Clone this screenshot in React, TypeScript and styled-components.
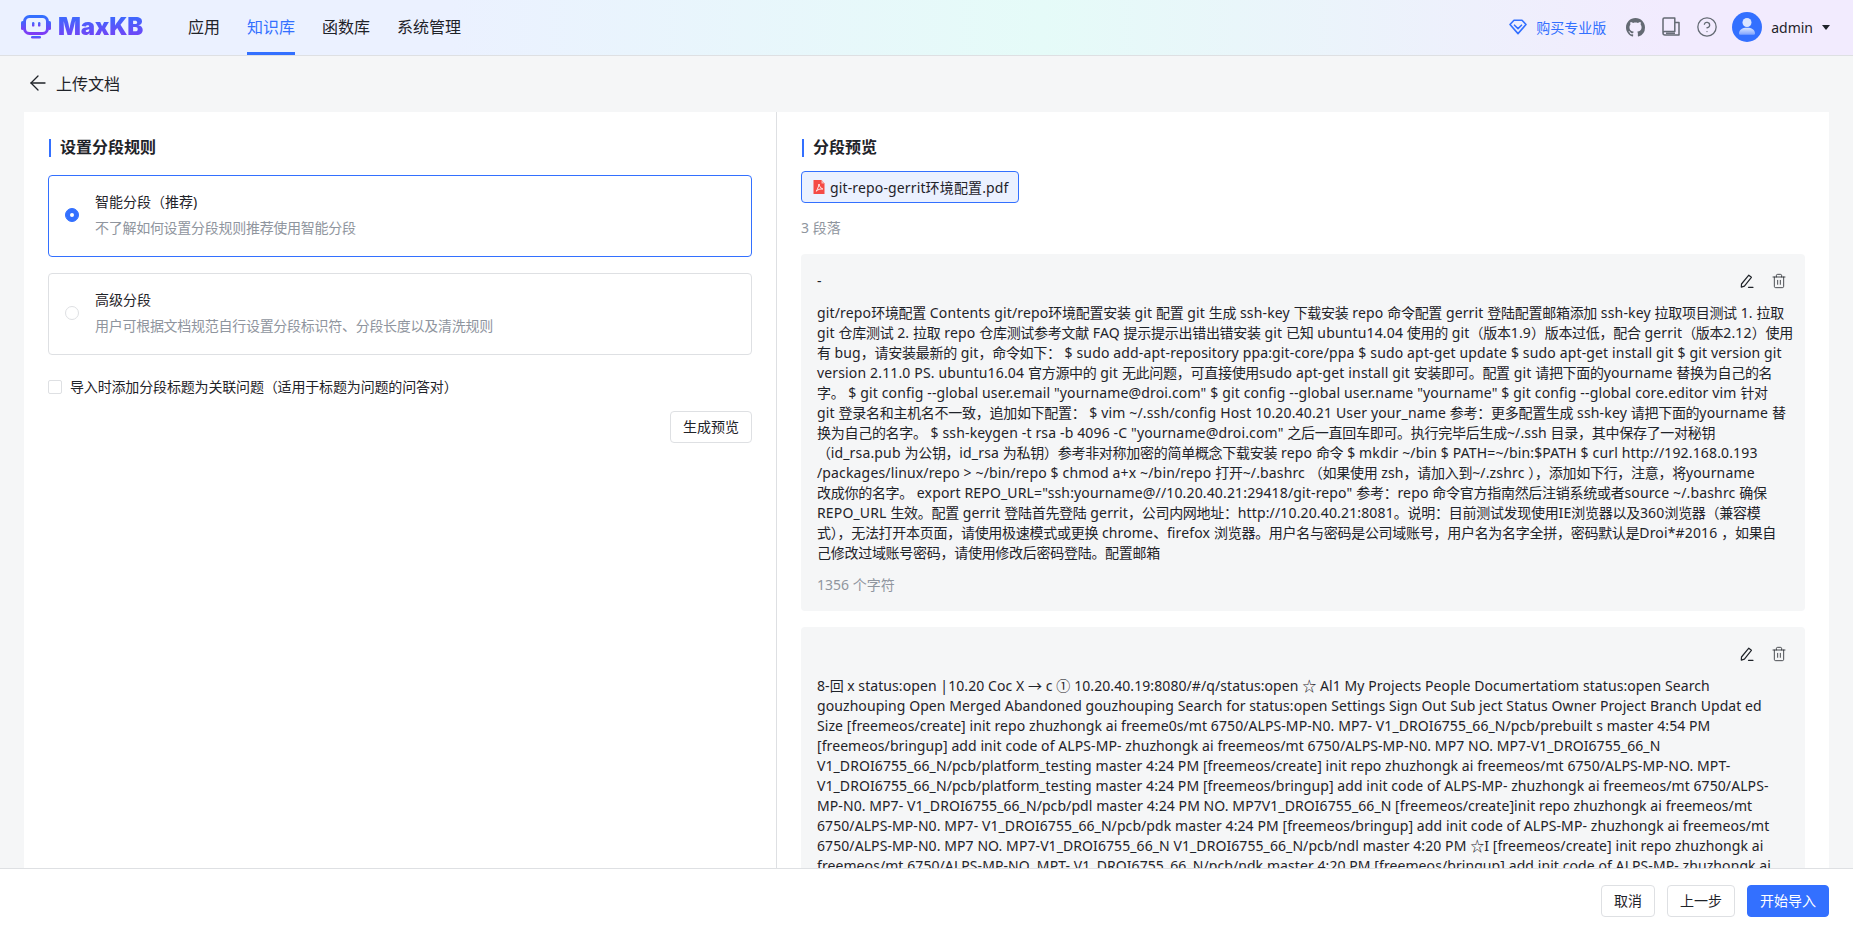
import React from 'react';
import styled, { createGlobalStyle } from 'styled-components';
import { ArrowLeft, CircleHelp, Trash2 } from 'lucide-react';

const GlobalStyle = createGlobalStyle`
  html, body, #root {
    margin: 0;
    height: 100%;
  }
  body {
    overflow: hidden;
    font-family: "Noto Sans", "Noto Sans CJK SC", sans-serif;
    font-size: 14px;
    color: #1f2329;
    background: #f5f6f7;
  }
  * {
    box-sizing: border-box;
  }
`;

const Page = styled.div`
  height: 933px;
  display: flex;
  flex-direction: column;
`;

const Header = styled.header`
  flex: 0 0 56px;
  display: flex;
  align-items: center;
  padding: 0 23px 1px 21px;
  border-bottom: 1px solid #dee0e3;
  background: linear-gradient(90deg, #ebf1ff 24.34%, #e5fbf8 56.18%, #f2ebfe 90.18%);
`;

const Logo = styled.div`
  display: flex;
  align-items: center;
  gap: 7px;
  width: 167px;
`;

const LogoText = styled.span`
  font-family: Inter, sans-serif;
  font-size: 24px;
  font-weight: 900;
  line-height: 28px;
  letter-spacing: -0.2px;
  background: linear-gradient(180deg, #3370ff 0%, #7f3bf5 100%);
  -webkit-background-clip: text;
  background-clip: text;
  color: transparent;
`;

const Nav = styled.nav`
  display: flex;
  align-self: stretch;
  gap: 27px;
`;

const NavItem = styled.a<{ $active?: boolean }>`
  display: flex;
  align-items: center;
  height: 55px;
  padding-bottom: 1px;
  font-size: 16px;
  color: ${p => (p.$active ? '#3370ff' : '#1f2329')};
  border-bottom: 3px solid ${p => (p.$active ? '#3370ff' : 'transparent')};
  margin-bottom: -1px;
`;

const HeaderRight = styled.div`
  margin-left: auto;
  display: flex;
  align-items: center;
`;

const BuyLink = styled.a`
  display: flex;
  align-items: center;
  gap: 9px;
  color: #3370ff;
  margin-right: 18px;
`;

const IconButton = styled.span`
  display: flex;
  width: 22px;
  height: 22px;
  align-items: center;
  justify-content: center;
  margin-right: 14px;
  color: #646a73;
`;

const Avatar = styled.span`
  display: block;
  width: 30px;
  height: 30px;
  margin-right: 9px;
`;

const UserName = styled.span`
  color: #1f2329;
`;

const Caret = styled.span`
  width: 0;
  height: 0;
  margin-left: 9px;
  border-left: 4px solid transparent;
  border-right: 4px solid transparent;
  border-top: 5px solid #1f2329;
`;

const BackRow = styled.div`
  flex: 0 0 56px;
  display: flex;
  align-items: center;
  gap: 6px;
  padding: 0 0 2px 26px;
  font-size: 16px;
`;

const Panel = styled.main`
  flex: 1;
  min-height: 0;
  margin: 0 24px;
  display: grid;
  grid-template-columns: 753px 1fr;
  background: #fff;
  overflow: hidden;
`;

const LeftColumn = styled.section`
  padding: 24px 24px 0;
  border-right: 1px solid #dee0e3;
`;

const RightColumn = styled.section`
  padding: 24px 24px 0;
  overflow: hidden;
`;

const SectionTitle = styled.h4<{ $gap: number }>`
  position: relative;
  margin: 0 0 ${p => p.$gap}px 1px;
  padding: 0 0 2px 11px;
  font-size: 16px;
  font-weight: 600;
  line-height: 22px;
  &::before {
    content: '';
    position: absolute;
    left: 0;
    top: 3px;
    width: 2px;
    height: 18px;
    background: #3370ff;
  }
`;

const RuleCard = styled.label<{ $active?: boolean }>`
  display: flex;
  align-items: center;
  gap: 16px;
  height: 82px;
  padding: 0 16px 2px;
  margin-bottom: 16px;
  border: 1px solid ${p => (p.$active ? '#3370ff' : '#dee0e3')};
  border-radius: 4px;
`;

const Radio = styled.span<{ $active?: boolean }>`
  flex: none;
  position: relative;
  width: 14px;
  height: 14px;
  border-radius: 50%;
  border: 1px solid ${p => (p.$active ? '#3370ff' : '#dee0e3')};
  background: ${p => (p.$active ? '#3370ff' : '#fff')};
  &::after {
    content: ${p => (p.$active ? "''" : 'none')};
    position: absolute;
    left: 4px;
    top: 4px;
    width: 4px;
    height: 4px;
    border-radius: 50%;
    background: #fff;
  }
`;

const RuleTitle = styled.div`
  line-height: 22px;
  margin-bottom: 4px;
`;

const MutedText = styled.div`
  line-height: 22px;
  color: #8f959e;
  letter-spacing: -0.28px;
`;

const CheckRow = styled.label`
  display: flex;
  align-items: center;
  gap: 8px;
  height: 22px;
  margin-top: 20px;
  letter-spacing: -0.16px;
`;

const CheckBox = styled.span`
  width: 14px;
  height: 14px;
  margin-top: 1px;
  border: 1px solid #dee0e3;
  border-radius: 2px;
  background: #fff;
`;

const PreviewRow = styled.div`
  display: flex;
  justify-content: flex-end;
  margin-top: 14px;
`;

const Button = styled.button<{ $primary?: boolean }>`
  height: 32px;
  padding: 0 12px;
  font: inherit;
  line-height: 22px;
  border-radius: 4px;
  border: 1px solid ${p => (p.$primary ? '#3370ff' : '#dee0e3')};
  background: ${p => (p.$primary ? '#3370ff' : '#fff')};
  color: ${p => (p.$primary ? '#fff' : '#1f2329')};
`;

const FileChip = styled.div`
  display: inline-flex;
  align-items: center;
  gap: 4px;
  height: 32px;
  padding: 0 9px 0 10px;
  border: 1px solid #3370ff;
  border-radius: 4px;
  background: #ebf1ff;
  letter-spacing: 0.14px;
`;

const Count = styled(MutedText)`
  margin: 14px 0 15px;
  letter-spacing: 0;
`;

const Paragraph = styled.article`
  padding: 16px 16px 15px;
  margin-bottom: 16px;
  border-radius: 4px;
  background: #f5f6f7;
`;

const ParagraphHead = styled.div`
  display: flex;
  align-items: center;
  height: 22px;
  line-height: 22px;
  margin-bottom: 11px;
`;

const ParagraphTitle = styled.span`
  flex: 1;
`;

const ParagraphAction = styled.span`
  display: flex;
  width: 16px;
  height: 16px;
  margin-left: 16px;
  color: #1f2329;
  &:last-child {
    margin-right: 2px;
  }
`;

const ParagraphLine = styled.div<{ $tracking: number }>`
  line-height: 20px;
  white-space: nowrap;
  letter-spacing: ${p => p.$tracking}px;
`;

const HanRun = styled.span`
  letter-spacing: -0.28px;
`;

const CharCount = styled(MutedText)`
  margin-top: 11px;
  letter-spacing: 0;
`;

const Footer = styled.footer`
  flex: 0 0 65px;
  display: flex;
  align-items: center;
  justify-content: flex-end;
  gap: 12px;
  padding: 0 24px;
  border-top: 1px solid #dee0e3;
  background: #fff;
`;

const LogoMark = () => (
  <svg width="30" height="24" viewBox="0 0 30 24" fill="none">
    <defs>
      <linearGradient id="logoFill" x1="0" y1="0" x2="0" y2="1">
        <stop offset="0" stopColor="#3370ff" />
        <stop offset="1" stopColor="#7f3bf5" />
      </linearGradient>
    </defs>
    <rect x="0" y="6" width="3" height="9" rx="1.5" fill="url(#logoFill)" />
    <rect x="27" y="6" width="3" height="9" rx="1.5" fill="url(#logoFill)" />
    <rect x="3.5" y="1.5" width="23" height="17" rx="5" stroke="url(#logoFill)" strokeWidth="3" />
    <rect x="11" y="7" width="2.4" height="4.6" rx="1.2" fill="url(#logoFill)" />
    <rect x="17" y="7" width="2.4" height="4.6" rx="1.2" fill="url(#logoFill)" />
    <rect x="10" y="21" width="10" height="2.6" rx="1.3" fill="url(#logoFill)" />
  </svg>
);

const DiamondIcon = () => (
  <svg width="18" height="16" viewBox="0 0 18 16" fill="none" stroke="#3370ff" strokeWidth="1.6" strokeLinejoin="round" strokeLinecap="round">
    <path d="M5 1.2h8l4 4.3L9 14.6 1 5.500z" />
    <path d="M5.500 6.200 9 9.600l3.500-3.400" />
  </svg>
);

const GithubIcon = () => (
  <svg width="19" height="19" viewBox="0 0 16 16" fill="currentColor">
    <path d="M8 0C3.58 0 0 3.58 0 8c0 3.54 2.29 6.53 5.47 7.59.4.07.55-.17.55-.38 0-.19-.01-.82-.01-1.49-2.01.37-2.53-.49-2.69-.94-.09-.23-.48-.94-.82-1.13-.28-.15-.68-.52-.01-.53.63-.01 1.08.58 1.23.82.72 1.21 1.87.87 2.33.66.07-.52.28-.87.51-1.07-1.78-.2-3.64-.89-3.64-3.95 0-.87.31-1.59.82-2.15-.08-.2-.36-1.02.08-2.12 0 0 .67-.21 2.2.82.64-.18 1.32-.27 2-.27s1.36.09 2 .27c1.53-1.04 2.2-.82 2.2-.82.44 1.1.16 1.92.08 2.12.51.56.82 1.27.82 2.15 0 3.07-1.87 3.75-3.65 3.95.29.25.54.73.54 1.48 0 1.07-.01 1.93-.01 2.2 0 .21.15.46.55.38A8.01 8.01 0 0 0 16 8c0-4.42-3.58-8-8-8z" />
  </svg>
);

const BookIcon = () => (
  <svg width="18" height="20" viewBox="0 0 18 20" fill="none" stroke="currentColor" strokeWidth="1.5" strokeLinejoin="round">
    <path d="M1 16V2.200A1.200 1.200 0 0 1 2.200 1h10.600v13.500H2.500A1.500 1.500 0 0 0 1 16a2 2 0 0 0 2 2h14V5.500h-4.200" />
    <path d="M4 16.200h9" />
  </svg>
);

const AvatarIcon = () => (
  <Avatar>
    <svg width="30" height="30" viewBox="0 0 30 30">
      <defs>
        <linearGradient id="avatarBody" x1="0" y1="0" x2="0" y2="1">
          <stop offset="0" stopColor="#dbe6ff" />
          <stop offset="1" stopColor="#7ea3ff" />
        </linearGradient>
      </defs>
      <circle cx="15" cy="15" r="15" fill="#3370ff" />
      <circle cx="15" cy="10.500" r="4.500" fill="#dbe6ff" />
      <path d="M7 21.500c0-4 3.400-5.800 8-5.800s8 1.800 8 5.800c0 .8-.5 1.200-1.200 1.200H8.200c-.7 0-1.200-.4-1.200-1.200z" fill="url(#avatarBody)" />
    </svg>
  </Avatar>
);

const PdfIcon = () => (
  <svg width="14" height="16" viewBox="0 0 14 16">
    <path d="M1.500 1h8l3 3.500V15h-11z" fill="#f54a45" />
    <path d="M9.500 1v3.500h3z" fill="#fbb5b2" />
    <path d="M7 5c.5 2.500 1.500 4 3.800 5-2.400-.2-5 .4-6.500 2.200C5.500 10.200 6.500 8 7 5z" fill="none" stroke="#fff" strokeWidth="0.9" />
  </svg>
);

const PencilIcon = () => (
  <svg width="16" height="16" viewBox="0 0 16 16" fill="none" stroke="currentColor" strokeWidth="1.2" strokeLinejoin="round" strokeLinecap="round">
    <path d="M2.500 11 9.800 2.200l2.600 2.100-7 8.800-3.100 1z" />
    <path d="M9.500 14.300h4.500" />
  </svg>
);

const firstLines = [
  'git/repo环境配置 Contents git/repo环境配置安装 git 配置 git 生成 ssh-key 下载安装 repo 命令配置 gerrit 登陆配置邮箱添加 ssh-key 拉取项目测试 1. 拉取',
  'git 仓库测试 2. 拉取 repo 仓库测试参考文献 FAQ 提示提示出错出错安装 git 已知 ubuntu14.04 使用的 git（版本1.9）版本过低，配合 gerrit（版本2.12）使用',
  '有 bug，请安装最新的 git，命令如下： $ sudo add-apt-repository ppa:git-core/ppa $ sudo apt-get update $ sudo apt-get install git $ git version git',
  'version 2.11.0 PS. ubuntu16.04 官方源中的 git 无此问题，可直接使用sudo apt-get install git 安装即可。配置 git 请把下面的yourname 替换为自己的名',
  '字。 $ git config --global user.email "yourname@droi.com" $ git config --global user.name "yourname" $ git config --global core.editor vim 针对',
  'git 登录名和主机名不一致，追加如下配置： $ vim ~/.ssh/config Host 10.20.40.21 User your_name 参考：更多配置生成 ssh-key 请把下面的yourname 替',
  '换为自己的名字。 $ ssh-keygen -t rsa -b 4096 -C "yourname@droi.com" 之后一直回车即可。执行完毕后生成~/.ssh 目录，其中保存了一对秘钥',
  '（id_rsa.pub 为公钥，id_rsa 为私钥）参考非对称加密的简单概念下载安装 repo 命令 $ mkdir ~/bin $ PATH=~/bin:$PATH $ curl http://192.168.0.193',
  '/packages/linux/repo > ~/bin/repo $ chmod a+x ~/bin/repo 打开~/.bashrc （如果使用 zsh，请加入到~/.zshrc ），添加如下行，注意，将yourname',
  '改成你的名字。 export REPO_URL="ssh:yourname@//10.20.40.21:29418/git-repo" 参考：repo 命令官方指南然后注销系统或者source ~/.bashrc 确保',
  'REPO_URL 生效。配置 gerrit 登陆首先登陆 gerrit，公司内网地址：http://10.20.40.21:8081。说明：目前测试发现使用IE浏览器以及360浏览器（兼容模',
  '式），无法打开本页面，请使用极速模式或更换 chrome、firefox 浏览器。用户名与密码是公司域账号，用户名为名字全拼，密码默认是Droi*#2016 ，如果自',
  '己修改过域账号密码，请使用修改后密码登陆。配置邮箱',
];

const secondLines = [
  '8-回 x status:open |10.20 Coc X → c ① 10.20.40.19:8080/#/q/status:open ☆ Al1 My Projects People Documertatiom status:open Search',
  'gouzhouping Open Merged Abandoned gouzhouping Search for status:open Settings Sign Out Sub ject Status Owner Project Branch Updat ed',
  'Size [freemeos/create] init repo zhuzhongk ai freeme0s/mt 6750/ALPS-MP-N0. MP7- V1_DROI6755_66_N/pcb/prebuilt s master 4:54 PM',
  '[freemeos/bringup] add init code of ALPS-MP- zhuzhongk ai freemeos/mt 6750/ALPS-MP-N0. MP7 NO. MP7-V1_DROI6755_66_N',
  'V1_DROI6755_66_N/pcb/platform_testing master 4:24 PM [freemeos/create] init repo zhuzhongk ai freemeos/mt 6750/ALPS-MP-NO. MPT-',
  'V1_DROI6755_66_N/pcb/platform_testing master 4:24 PM [freemeos/bringup] add init code of ALPS-MP- zhuzhongk ai freemeos/mt 6750/ALPS-',
  'MP-N0. MP7- V1_DROI6755_66_N/pcb/pdl master 4:24 PM NO. MP7V1_DROI6755_66_N [freemeos/create]init repo zhuzhongk ai freemeos/mt',
  '6750/ALPS-MP-N0. MP7- V1_DROI6755_66_N/pcb/pdk master 4:24 PM [freemeos/bringup] add init code of ALPS-MP- zhuzhongk ai freemeos/mt',
  '6750/ALPS-MP-N0. MP7 NO. MP7-V1_DROI6755_66_N V1_DROI6755_66_N/pcb/ndl master 4:20 PM ☆I [freemeos/create] init repo zhuzhongk ai',
  'freemeos/mt 6750/ALPS-MP-NO. MPT- V1_DROI6755_66_N/pcb/ndk master 4:20 PM [freemeos/bringup] add init code of ALPS-MP- zhuzhongk ai',
];

// the screenshot's font has tighter han text than latin, so han runs get their own spacing
const renderRuns = (line: string) =>
  line.split(/([\u3000-\u303f\u4e00-\u9fff\uff00-\uffef]+)/).map((run, i) =>
    i % 2 === 0 ? run : <HanRun key={i}>{run}</HanRun>
  );

const ParagraphCard = (props: { title?: string; lines: string[]; count?: string; tracking: number }) => (
  <Paragraph>
    <ParagraphHead>
      <ParagraphTitle>{props.title}</ParagraphTitle>
      <ParagraphAction><PencilIcon /></ParagraphAction>
      <ParagraphAction><Trash2 size={16} strokeWidth={1.2} /></ParagraphAction>
    </ParagraphHead>
    {props.lines.map((line, i) => (
      <ParagraphLine key={i} $tracking={props.tracking}>{renderRuns(line)}</ParagraphLine>
    ))}
    {props.count && <CharCount>{props.count}</CharCount>}
  </Paragraph>
);

export default function App() {
  return (
    <Page>
      <GlobalStyle />
      <Header>
        <Logo>
          <LogoMark />
          <LogoText>MaxKB</LogoText>
        </Logo>
        <Nav>
          <NavItem>应用</NavItem>
          <NavItem $active>知识库</NavItem>
          <NavItem>函数库</NavItem>
          <NavItem>系统管理</NavItem>
        </Nav>
        <HeaderRight>
          <BuyLink><DiamondIcon />购买专业版</BuyLink>
          <IconButton><GithubIcon /></IconButton>
          <IconButton><BookIcon /></IconButton>
          <IconButton><CircleHelp size={22} strokeWidth={1.4} /></IconButton>
          <AvatarIcon />
          <UserName>admin</UserName>
          <Caret />
        </HeaderRight>
      </Header>
      <BackRow>
        <ArrowLeft size={24} strokeWidth={1.3} />
        上传文档
      </BackRow>
      <Panel>
        <LeftColumn>
          <SectionTitle $gap={15}>设置分段规则</SectionTitle>
          <RuleCard $active>
            <Radio $active />
            <div>
              <RuleTitle>智能分段（推荐)</RuleTitle>
              <MutedText>不了解如何设置分段规则推荐使用智能分段</MutedText>
            </div>
          </RuleCard>
          <RuleCard>
            <Radio />
            <div>
              <RuleTitle>高级分段</RuleTitle>
              <MutedText>用户可根据文档规范自行设置分段标识符、分段长度以及清洗规则</MutedText>
            </div>
          </RuleCard>
          <CheckRow>
            <CheckBox />
            导入时添加分段标题为关联问题（适用于标题为问题的问答对）
          </CheckRow>
          <PreviewRow>
            <Button>生成预览</Button>
          </PreviewRow>
        </LeftColumn>
        <RightColumn>
          <SectionTitle $gap={11}>分段预览</SectionTitle>
          <FileChip><PdfIcon />git-repo-gerrit环境配置.pdf</FileChip>
          <Count>3 段落</Count>
          <ParagraphCard title="-" lines={firstLines} count="1356 个字符" tracking={0.15} />
          <ParagraphCard lines={secondLines} tracking={0.08} />
        </RightColumn>
      </Panel>
      <Footer>
        <Button>取消</Button>
        <Button>上一步</Button>
        <Button $primary>开始导入</Button>
      </Footer>
    </Page>
  );
}
